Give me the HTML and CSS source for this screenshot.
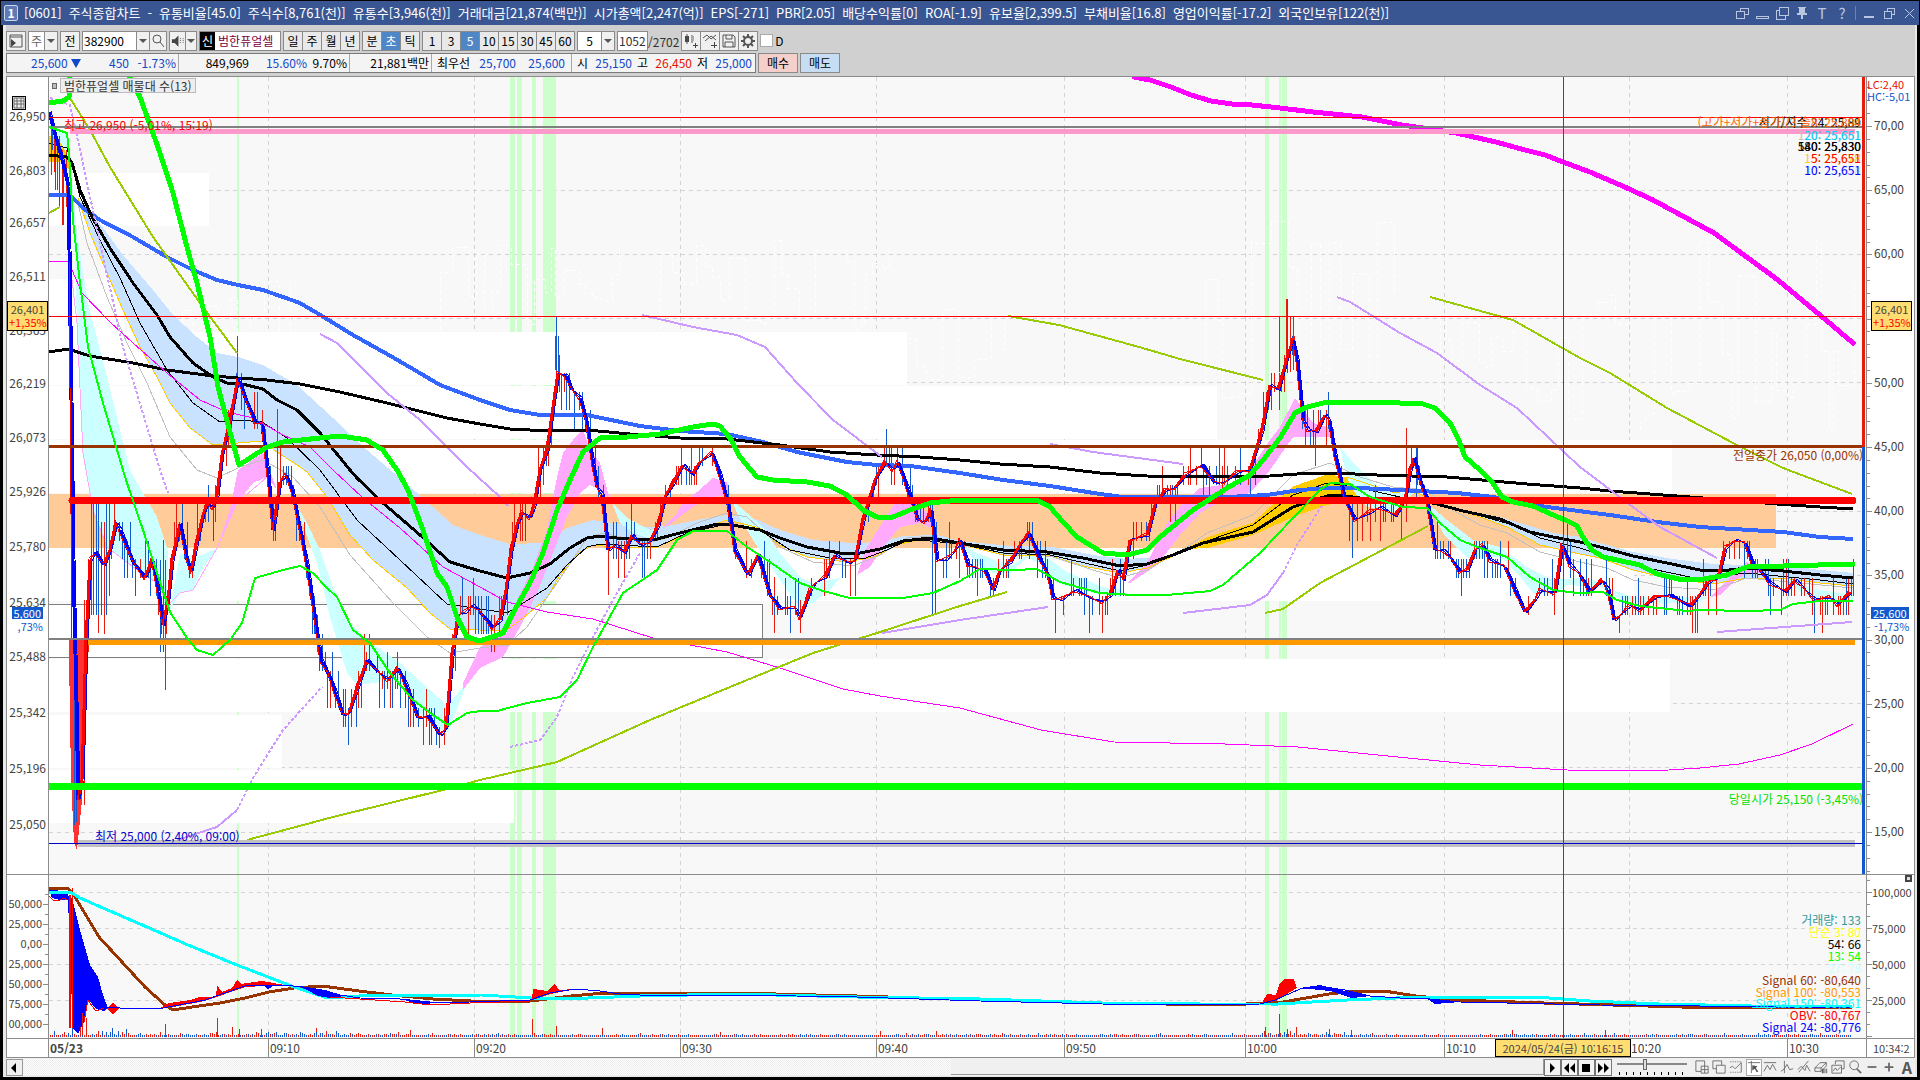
FILE: index.html
```
<!DOCTYPE html>
<html lang="ko">
<head>
<meta charset="utf-8">
<title>[0601] 주식종합차트</title>
<link rel="stylesheet" href="styles.css">
</head>
<body>
<header class="titlebar">
  <span class="win-no">1</span>
  <h1 class="title"><span>[0601]</span><span>주식종합차트</span><span>-</span><span>유통비율[45.0]</span><span>주식수[8,761(천)]</span><span>유통수[3,946(천)]</span><span>거래대금[21,874(백만)]</span><span>시가총액[2,247(억)]</span><span>EPS[-271]</span><span>PBR[2.05]</span><span>배당수익률[0]</span><span>ROA[-1.9]</span><span>유보율[2,399.5]</span><span>부채비율[16.8]</span><span>영업이익률[-17.2]</span><span>외국인보유[122(천)]</span></h1>
  <nav class="win-tools">
    <button aria-label="분리"><svg viewBox="0 0 14 14"><path d="M5 5V2h8v6h-4M1 5h8v7H1z"/></svg></button>
    <button aria-label="접기"><svg viewBox="0 0 14 14"><path d="M1 12V10h12v2z"/></svg></button>
    <button aria-label="복사"><svg viewBox="0 0 14 14"><path d="M4 1h9v8H4zM4 4H1v9h9V9"/></svg></button>
    <button aria-label="고정"><svg viewBox="0 0 14 14"><path class="f" d="M3 1h8v1h-1v5h2v2H8v4H6V9H2V7h2V2H3z"/></svg></button>
    <button>T</button>
    <button>?</button>
    <i class="bar"></i>
    <button aria-label="최소화"><svg viewBox="0 0 14 14"><path class="f" d="M2 10h10v2H2z"/></svg></button>
    <button aria-label="이전 크기"><svg viewBox="0 0 14 14"><path d="M5 5V2h7v6H9M2 5h7v7H2z"/></svg></button>
    <button aria-label="닫기"><svg viewBox="0 0 14 14"><path d="M3 3l9 9M12 3l-9 9"/></svg></button>
  </nav>
</header>
<main class="window">
  <div class="toolbar">
    <button class="btn w20" aria-label="메뉴"><svg viewBox="0 0 16 16"><path d="M2 2h12v12H2zM2 4h12"/><path class="k" d="M3 6l5 4-5 4z"/></svg></button>
    <span class="combo"><button class="box w16 dim">주</button><button class="drop" aria-label="열기"></button></span>
    <button class="btn w20">전</button>
    <span class="combo"><input class="box w56" value="382900" aria-label="종목코드"><button class="drop" aria-label="열기"></button><button class="btn w18" aria-label="검색"><svg viewBox="0 0 16 16"><circle cx="7" cy="6" r="4"/><path d="M10 9l4 5"/></svg></button></span>
    <span class="combo"><button class="btn w16" aria-label="소리"><svg viewBox="0 0 16 16"><path class="k" d="M2 6h3l4-4v12l-4-4H2z"/><path d="M11 5v6M14 5v6" stroke-dasharray="1 1"/></svg></button><button class="drop slim" aria-label="열기"></button></span>
    <span class="name"><b>신</b>범한퓨얼셀</span>
    <span class="group"><button>일</button><button>주</button><button>월</button><button>년</button></span>
    <span class="group"><button>분</button><button class="on">초</button><button>틱</button></span>
    <span class="group"><button>1</button><button>3</button><button class="on">5</button><button>10</button><button>15</button><button>30</button><button>45</button><button>60</button></span>
    <span class="combo"><input class="box w24 mid" value="5" aria-label="간격"><button class="drop" aria-label="열기"></button></span>
    <span class="count"><input class="box w28" value="1052" aria-label="봉 개수">/2702</span>
    <span class="group tools">
      <button aria-label="봉 추가"><svg viewBox="0 0 16 16"><path class="k" d="M2 3h4v6H2zM10 12h5v1h-5zM12 10h1v5h-1z"/><path d="M4 1v10M9 2v8"/><path class="g" d="M8 3h3v5H8z"/></svg></button>
      <button aria-label="지표 추가"><svg viewBox="0 0 16 16"><path d="M1 5l4-3 4 4 5-4M3 8l6-5 5 4"/><path class="k" d="M9 12h6v1H9zM12 9h1v6h-1z"/></svg></button>
      <button aria-label="저장"><svg viewBox="0 0 16 16"><path d="M2 2h10l2 2v10H2zM5 2v4h6V2M4 14V9h8v5"/></svg></button>
      <button aria-label="설정"><svg viewBox="0 0 16 16"><circle cx="8" cy="8" r="4" stroke-width="2"/><path stroke-width="2" stroke-linecap="butt" d="M8 1v3M8 12v3M1 8h3M12 8h3M3 3l2 2M11 11l2 2M13 3l-2 2M3 13l2-2"/></svg></button>
    </span>
    <label class="dcheck"><input type="checkbox">D</label>
  </div>
  <div class="quotes">
    <div class="quote-box">
      <span class="q blue c1">25,600 <i class="down"></i></span><span class="q blue c2">450</span><span class="q blue c3 sep">-1.73%</span>
      <span class="q c4">849,969</span><span class="q blue c5">15.60%</span><span class="q c6 sep">9.70%</span>
      <span class="q c7 sep">21,881백만</span><span class="q c8">최우선</span><span class="q blue c9">25,700</span><span class="q blue c9 sep2">25,600</span>
      <span class="q c10">시</span><span class="q blue c11">25,150</span><span class="q c10">고</span><span class="q red c11">26,450</span><span class="q c10">저</span><span class="q blue c11">25,000</span>
    </div>
    <button class="trade buy">매수</button>
    <button class="trade sell">매도</button>
  </div>
  <section class="chart">
    <div class="axis left" id="axisLeft"><button class="grid-btn" aria-label="표"><svg viewBox="0 0 12 12"><path d="M1 1h10v10H1zM1 4h10M1 7h10M4 1v10M8 1v10"/></svg></button></div>
    <div class="plot" id="plot">
      <svg id="canvas" viewBox="49 77 1817 961" preserveAspectRatio="none"></svg>
      <div class="legend-tag"><i></i><span>범한퓨얼셀 매물대 수(13)</span></div>
    </div>
    <div class="axis right" id="axisRight"><button class="panel-x" aria-label="닫기"></button></div>
    <div class="time-pad"></div>
    <div class="times" id="times"></div>
    <div class="time-end">10:34:2</div>
  </section>
  <footer class="bottom">
    <button class="scroll-btn" aria-label="왼쪽"><svg viewBox="0 0 12 12"><path d="M8 1L3 6l5 5z"/></svg></button>
    <div class="track"><div class="thumb"></div></div>
    <div class="play">
      <button aria-label="재생"><svg viewBox="0 0 12 12"><path d="M4 1l5 5-5 5z"/></svg></button>
      <button aria-label="뒤로"><svg viewBox="0 0 12 12"><path d="M6 1L1 6l5 5zM12 1L7 6l5 5z"/></svg></button>
      <button aria-label="정지"><svg viewBox="0 0 12 12"><path d="M2 2h8v8H2z"/></svg></button>
      <button aria-label="앞으로"><svg viewBox="0 0 12 12"><path d="M1 1l5 5-5 5zM7 1l5 5-5 5z"/></svg></button>
    </div>
    <input class="speed" type="range" min="0" max="10" value="4" aria-label="속도">
    <div class="draw">
      <button aria-label="창 추가"><svg viewBox="0 0 16 16"><path d="M1 1h10v12H1z"/><path class="w" d="M7 7h8v8H7zM11 7v8M7 11h8"/></svg></button>
      <button aria-label="창 겹침"><svg viewBox="0 0 16 16"><path d="M1 1h10v9H1z"/><path class="w" d="M5 6h10v9H5z"/></svg></button>
      <button aria-label="영역"><svg viewBox="0 0 16 16"><path d="M1 2h14M1 14h14" stroke-dasharray="1 1"/><path d="M1 9l3-2 3 3 7-7M14 3v11"/></svg></button>
      <button class="active" aria-label="십자선"><svg viewBox="0 0 16 16"><path d="M1 3h14M5 1v14"/><path class="k" d="M6 6l6 1-2 2 3 4-2 1-2-4-3 2z"/></svg></button>
      <button aria-label="추세"><svg viewBox="0 0 16 16"><path d="M1 3h14M1 13l4-7 3 5 3-6 4 7"/></svg></button>
      <button aria-label="수직선"><svg viewBox="0 0 16 16"><path d="M5 1v14M1 13l4-3 3-5 3 6 4-1"/></svg></button>
      <button aria-label="사선"><svg viewBox="0 0 16 16"><path d="M2 14L13 1M1 11l4-4 4 5 2-6 4 7"/></svg></button>
      <button aria-label="모두 지우기"><svg viewBox="0 0 16 16"><path d="M1 9l6-6h7l-6 6zM1 9v4h7V9M8 13l6-6V3"/><path class="k" d="M9 10h2v5H9zM12 10h1v5h-1zM14 10h1v5h-1z"/></svg></button>
      <button aria-label="차트 저장"><svg viewBox="0 0 16 16"><path d="M5 5V1h10v9h-3"/><path class="w" d="M1 6h11v9H1zM2 13l3-4 2 3 4-4"/></svg></button>
      <button aria-label="확대"><svg viewBox="0 0 16 16"><circle cx="7" cy="6" r="5"/><path d="M10 10l5 5" stroke-width="2"/></svg></button>
      <button aria-label="축소"><svg viewBox="0 0 16 16"><path d="M3 8h10" stroke-width="2"/></svg></button>
      <button aria-label="늘리기"><svg viewBox="0 0 16 16"><path d="M3 8h10M8 3v10" stroke-width="2"/></svg></button>
      <button class="bold">A</button>
    </div>
  </footer>
</main>
<script src="chart.js"></script>
</body>
</html>
```
FILE: styles.css
```
* { box-sizing: border-box; }
body {
  margin: 0;
  height: 100vh;
  padding: 1px 1px 3px;
  display: flex;
  flex-direction: column;
  overflow: hidden;
  background: #000;
  color: #000;
  font: 12px/12px "Noto Sans CJK KR", sans-serif;
}
button, input { font: inherit; color: inherit; margin: 0; padding: 0; border-radius: 0; }
svg { display: block; }

.titlebar {
  flex: none;
  height: 24px;
  display: flex;
  align-items: center;
  gap: 6px;
  padding: 0 3px;
  background: #3a5692;
  color: #fff;
}
.win-no {
  width: 14px;
  height: 16px;
  border: 1px solid #cdd6ea;
  border-radius: 2px;
  background: #5f7bb5;
  text-align: center;
  font-weight: bold;
  line-height: 14px;
}
.title { margin: 0; font-size: 13px; line-height: 16px; font-weight: normal; display: flex; gap: 7px; white-space: nowrap; }
.win-tools { margin-left: auto; display: flex; align-items: center; gap: 6px; }
.win-tools button { width: 14px; height: 16px; border: 0; background: none; color: #b9c6e2; font-size: 15px; line-height: 14px; }
.win-tools svg { width: 14px; height: 14px; shape-rendering: crispEdges; }
.win-tools path { fill: none; stroke: #b9c6e2; }
.win-tools .f { fill: #b9c6e2; stroke: none; }
.win-tools .bar { width: 1px; height: 14px; background: #6d83b3; }

.window {
  flex: 1;
  min-height: 0;
  display: flex;
  flex-direction: column;
  margin: 0 2px 0 2px;
  border: solid #e8e8e8;
  border-width: 0 2px 1px 3px;
  background: #d0d0d0;
}
.toolbar { flex: none; display: flex; align-items: center; gap: 2px; height: 26px; padding-top: 5px; }
.toolbar button, .box, .name { height: 20px; }
.btn, .drop, .group button {
  border: 1px solid #8a8a8a;
  background: #f0f0f0;
  display: inline-flex;
  align-items: center;
  justify-content: center;
}
.btn svg, .group svg { width: 16px; height: 16px; }
.toolbar path, .toolbar circle { fill: none; stroke: #555; }
.toolbar .k { fill: #444; stroke: none; }
.toolbar .g { fill: #aaa; stroke: none; }
.combo, .group { display: flex; }
.combo > * + * { margin-left: -1px; }
.group button { width: 20px; margin-right: -1px; background: #e9e9e9; }
.group { margin-right: 1px; }
.group .on { background: #4f87c6; color: #fff; }
.box { border: 1px solid #8a8a8a; background: #fff; padding: 0 1px; }
.mid { text-align: center; }
.dim { color: #666; }
.w16 { width: 17px; } .w18 { width: 18px; } .w20 { width: 20px; } .w24 { width: 25px; } .w28 { width: 31px; } .w56 { width: 55px; }
.drop { width: 14px; }
.slim { width: 12px; }
.drop::after { content: ""; border: 4px solid transparent; border-top-color: #555; border-bottom: 0; }
.name { display: flex; align-items: center; width: 82px; border: 1px solid #8a8a8a; background: #fff; color: #7d0040; white-space: nowrap; overflow: hidden; gap: 3px; }
.name b { background: #000; color: #fff; font-weight: normal; padding: 3px 2px; }
.count { color: #333; white-space: nowrap; }
.tools button { background: #f0f0f0; }
.dcheck { display: flex; align-items: center; gap: 2px; }
.dcheck input { appearance: none; width: 13px; height: 13px; border: 1px solid #aaa; background: #fff; }

.quotes { flex: none; display: flex; gap: 2px; height: 25px; padding: 2px 0 3px; }
.quote-box { display: flex; align-items: center; width: 750px; border: 1px solid #7a7a7a; background: #f4f4f4; }
.q { flex: none; text-align: right; white-space: nowrap; line-height: 18px; }
.sep { border-right: 1px solid #a8a8a8; padding-right: 2px; }
.sep2 { border-right: 1px solid #a8a8a8; padding-right: 6px; }
.blue { color: #1048c8; }
.red { color: #e81400; }
.down { display: inline-block; border: 5px solid transparent; border-top: 9px solid #1048c8; border-bottom: 0; }
.c1 { width: 74px; } .c2 { width: 48px; } .c3 { width: 50px; } .c4 { width: 70px; } .c5 { width: 58px; } .c6 { width: 43px; }
.c7 { width: 82px; } .c8 { width: 38px; } .c9 { width: 46px; } .sep2 { width: 56px; } .c10 { width: 16px; } .c11 { width: 44px; }
.trade { width: 40px; border: 1px solid #8a8a8a; }
.buy { background: #f5cfca; }
.sell { background: #c7ddf4; }

.chart {
  flex: 1;
  min-height: 0;
  display: grid;
  grid-template-columns: 42px 1fr 48px;
  grid-template-rows: 1fr 19px;
  border: 1px solid #8c8c8c;
  background: #fff;
  color: #444;
}
.axis { position: relative; overflow: hidden; }
.axis.left { border-right: 1px solid #8c8c8c; }
.axis.right { border-left: 1px solid #8c8c8c; }
.axis span { position: absolute; white-space: nowrap; transform: translateY(-50%); }
.axis.left span { right: 2px; }
.axis.right span { left: 7px; }
.axis.left .low { right: 6px; font-size: 11px; }
.axis.right .low { font-size: 11px; left: 5px; }
.axis i { position: absolute; height: 1px; width: 3px; background: #8c8c8c; }
.axis.right i { left: 0; }
.axis.left i { right: 0; }
.axis i.big { width: 5px; }
.axis i.rule { width: 100%; }
.axis .badge { border: 1px solid #000; background: #ffdd70; width: 41px; padding: 1px; font-size: 11px; line-height: 13px; text-align: center; }
.axis .badge em { display: block; font-style: normal; color: #f00; }
.axis.left .badge { right: 0; }
.axis.right .badge { left: 4px; }
.axis .now { background: #1159cc; color: #fff; padding: 0 2px; font-size: 11px; }
.axis .chg { color: #1159cc; font-size: 11px; }
.axis.left .now, .axis.left .chg { right: 5px; }
.axis.right .now { left: 4px; }
.axis .lc { color: #e81400; font-size: 11px; }
.axis .hc { color: #1159cc; font-size: 11px; }
.axis.right .lc, .axis.right .hc { left: 0; }
.grid-btn { position: absolute; left: 5px; top: 19px; width: 14px; height: 14px; border: 1px solid #000; background: #eee; }
.grid-btn path { fill: none; stroke: #666; }
.panel-x { position: absolute; right: 2px; top: 83%; width: 7px; height: 7px; border: 2px solid #444; background: #ddd; }
.plot { position: relative; overflow: hidden; background: #f8f8f8; }
.plot svg { position: absolute; width: 100%; height: 100%; shape-rendering: crispEdges; }
.plot > span { position: absolute; white-space: nowrap; transform: translateY(-50%); }
.legend-tag { position: absolute; top: 1px; left: 3px; display: flex; align-items: center; gap: 3px; color: #333; }
.legend-tag i { width: 5px; height: 6px; border: 1px solid #666; background: #bbb; }
.legend-tag span { border: 1px solid #bbb; background: #eee; padding: 0 3px; line-height: 13px; }
.time-pad { border-right: 1px solid #8c8c8c; border-top: 1px solid #8c8c8c; }
.times { position: relative; border-top: 1px solid #8c8c8c; }
.times span { position: absolute; top: 0; height: 100%; padding: 3px 1px; border-left: 1px solid #8c8c8c; }
.times .first { border: 0; font-weight: bold; }
.times .cursor { border: 1px solid #000; background: #ffdd70; width: 136px; padding: 2px 1px; font-size: 11px; text-align: center; transform: translateX(-50%); white-space: nowrap; }
.time-end { border-left: 1px solid #8c8c8c; border-top: 1px solid #8c8c8c; padding: 3px 0 0 6px; font-size: 11px; white-space: nowrap; }

.bottom { flex: none; display: flex; align-items: center; height: 18px; background: #f0f0f0; }
.scroll-btn { width: 17px; height: 17px; border: 1px solid #999; background: #f0f0f0; padding: 2px 1px; }
.scroll-btn svg { width: 12px; height: 12px; }
.track { flex: 1; height: 16px; display: flex; justify-content: flex-end; background: repeating-conic-gradient(#fff 0 25%, #ececec 0 50%) 0 0 / 2px 2px; }
.thumb { width: 39%; border: solid #999; border-width: 0 1px 1px 0; background: #f0f0f0; }
.play { display: flex; }
.play button { width: 17px; height: 17px; border: 1px solid #777; background: #f4f4f4; padding: 2px 1px; }
.play svg { width: 12px; height: 12px; }
.speed {
  appearance: none;
  width: 70px;
  height: 16px;
  margin: 0 8px 0 5px;
  background:
    linear-gradient(#888, #888) 0 4px / 100% 2px no-repeat,
    repeating-linear-gradient(90deg, #000 0 1px, transparent 1px 7px) 2px 13px / 100% 3px no-repeat;
}
.speed::-webkit-slider-thumb { appearance: none; width: 4px; height: 11px; margin-bottom: 5px; border: 1px solid #666; background: #ddd; }
.draw { display: flex; gap: 1px; }
.draw button { width: 16px; height: 17px; border: 0; background: none; color: #555; }
.draw .active { background: #fff; border: 1px solid #aaa; }
.draw svg { width: 14px; height: 14px; }
.draw path, .draw circle { fill: none; stroke: #666; }
.draw .w { fill: #f0f0f0; }
.draw .k { fill: #555; stroke: none; }
.draw .bold { font-weight: bold; font-size: 16px; }
```
FILE: chart.js
```
// Price chart: series are [x, y] pairs in the chart's own coordinate space.
const X0 = 49, W = 1817, Y0 = 77, H = 961;
const out = [];
const line = (pts, color, w, extra = '') =>
  out.push(`<polyline points="${pts}" fill="none" stroke="${color}" stroke-width="${w}" stroke-linejoin="round" ${extra}/>`);
const area = (pts, color) => out.push(`<polygon points="${pts}" fill="${color}"/>`);
const rect = (x, y, w, h, color) => out.push(`<rect x="${x}" y="${y}" width="${w}" height="${h}" fill="${color}"/>`);
const parse = s => s.trim().split(/\s+/).map(p => p.split(',').map(Number));
const at = (pts, x) => {
  for (let i = 1; i < pts.length; i++) if (x <= pts[i][0]) {
    const [a, b] = pts[i - 1], [c, d] = pts[i];
    return b + (d - b) * (x - a) / (c - a || 1);
  }
  return pts[pts.length - 1][1];
};
let seed = 7;
const rnd = () => (seed = (seed * 16807) % 2147483647) / 2147483647;

// grid
const gridX = [268, 474, 680, 876, 1064, 1245, 1444, 1629, 1787];
gridX.forEach(x => line(`${x + .5},77 ${x + .5},1038`, '#d3d3d3', 1, 'stroke-dasharray="4 4"'));
[126, 190, 254, 318, 382, 446, 511, 575, 639, 703, 767, 832, 892, 928, 964, 1000]
  .forEach(y => line(`49,${y + .5} 1863,${y + .5}`, '#d3d3d3', 1, 'stroke-dasharray="4 4"'));
// signal bands
[[237, 2], [510, 5], [517, 5], [532, 4], [543, 13], [1265, 4], [1279, 2], [1282, 5]]
  .forEach(([x, w]) => rect(x, 77, w, 961, '#ccffcc'));

// volume profile
[[173, 209], [279, 124], [332, 907], [386, 1217], [440, 1672], [548, 1634], [604, 763], [659, 1670], [715, 282], [770, 514]]
  .forEach(([y, x]) => rect(49, y, x - 49, 53, '#fff'));
rect(49, 494, 1727, 54, '#ffcb98');
line('49,604.5 762.5,604.5 762.5,657.5 49,657.5', '#808080', 1);

// faint white dashed history line above the price
function ghost(a, b, base, amp) {
  let d = '', y = base;
  for (let x = a; x < b; x += 4 + Math.floor(rnd() * 14)) { d += `${x},${y} `; y = base - rnd() * amp; d += `${x},${y} `; }
  line(d, '#fff', 1, 'stroke-dasharray="4 3"');
}
ghost(160, 300, 420, 150); ghost(440, 620, 330, 90); ghost(660, 890, 330, 90); ghost(900, 1010, 380, 110);
ghost(1180, 1400, 420, 200); ghost(1440, 1640, 430, 140); ghost(1640, 1855, 430, 190);

// filled spreads
const BLUE_UP = '92,213 123,255 153,290 173,315 197,337 217,353 238,357 263,365 297,385 333,418 367,450 408,485 433,507 453,525 480,535 510,544 543,543 567,528 593,520 613,523 647,527 667,526 697,520 727,515 753,518 780,530 813,540 853,543 880,542 903,536 937,535 960,541 1010,546 1053,547 1093,555 1127,559 1160,557 1180,552';
const YEL = '78,198 90,233 107,273 123,310 140,347 157,377 170,403 190,428 213,445 238,443 262,441 277,452 297,465 307,472 327,497 350,535 373,560 407,588 430,613 450,629 480,630 507,630 523,618 547,598 560,575 580,552 593,545 613,547 657,547 680,537 707,527 727,520 760,528 780,545 807,557 847,562 873,557 900,544 927,538 960,544 1003,555 1047,555 1083,566 1120,573 1147,568 1173,556 1187,548';
const YEL2 = '1187,548 1207,538 1253,523 1293,487 1327,475 1350,478 1377,487 1420,494 1447,507 1480,517 1507,527 1540,545 1580,554 1600,558 1633,570 1667,578 1713,584 1747,578 1783,578 1820,583 1853,586';
const rev = s => s.split(' ').reverse().join(' ');
area(BLUE_UP + ' ' + rev(YEL), '#c8e2ff');
area('1447,507 1500,517 1553,533 1580,537 1600,543 1633,552 1673,559 1713,564 1747,565 1783,565 1820,570 1853,573 1853,586 1820,583 1783,578 1747,578 1713,584 1667,578 1633,570 1600,558 1580,554 1540,545 1507,527 1480,517', '#c8e2ff');
area('1187,549 1207,538 1253,523 1293,487 1327,475 1350,478 1377,487 1400,491 1400,503 1377,500 1353,500 1327,505 1300,514 1253,535 1207,548', '#ffcc00');
rect(49, 136, 11, 26, '#ffcc00');
area('60,138 72,160 69,170 60,160', '#ffcc00');
const CY = '#ccffff', PK = '#ffaaff';
area('50,125 66,132 72,165 62,145', CY);
area('72,180 77,233 88,303 107,377 130,470 143,493 157,517 168,550 167,610 157,583 133,567 107,547 93,510 85,467 83,453 77,323', CY);
area('170,610 180,553 197,557 217,548 200,573 193,590 180,593 172,607', CY);
area('217,548 230,510 238,470 263,453 277,490 267,477 253,483 237,503', PK);
area('290,493 307,523 320,550 333,587 350,623 370,642 400,663 430,690 447,705 467,683 448,732 433,727 417,710 400,680 357,685 347,673 330,617 317,563 300,517', CY);
area('463,683 480,647 507,633 517,600 533,567 547,530 557,477 563,453 577,435 583,430 590,450 600,463 610,500 600,490 590,485 580,493 567,517 553,553 537,593 520,627 503,657 480,668 463,690', PK);
area('612,503 627,518 650,530 660,530 653,540 633,533 620,523', CY);
area('660,530 677,513 683,502 697,492 713,478 727,482 730,495 713,497 693,507 673,522', PK);
area('732,500 747,513 763,527 780,553 800,577 813,583 840,578 830,590 813,603 800,608 787,590 773,570 753,540 737,513', CY);
area('857,575 867,547 880,527 897,500 913,500 927,513 937,530 920,523 900,527 883,547 870,567', PK);
area('960,543 977,553 1003,563 1013,565 1027,555 1047,557 1067,572 1103,587 1123,590 1120,597 1093,593 1057,583 1040,563 1027,558 1010,573 993,573 977,563', CY);
area('1127,583 1147,563 1167,523 1183,503 1200,488 1237,483 1250,470 1270,440 1280,427 1295,398 1313,423 1330,428 1330,437 1293,437 1270,470 1250,493 1223,500 1200,513 1180,535 1157,565 1130,583', PK);
area('1340,447 1357,467 1373,483 1393,493 1413,493 1397,513 1367,507 1350,487 1343,460', CY);
area('1427,503 1447,520 1473,540 1500,547 1527,567 1553,580 1580,578 1603,582 1613,590 1633,597 1707,597 1700,602 1667,603 1627,603 1600,587 1567,585 1557,593 1533,593 1517,573 1500,557 1467,558 1443,533', CY);
area('1710,597 1730,577 1747,562 1763,573 1747,573 1733,582 1720,595', PK);
area('1787,582 1820,590 1853,595 1853,602 1807,597', CY);

// thin averages
line('70,262 77,323 83,453 93,510 107,547 133,567 157,583 168,605 180,593 193,590 217,548 237,503 267,477', PK, 1);
line(YEL, '#ffcc00', 1);
line(YEL2, '#ffcc00', 1);
line('78,203 87,243 107,297 127,343 147,383 170,437 197,470 217,478 240,467 263,460 293,477 320,507 350,555 393,603 427,637 450,653 480,648 507,645 527,627 557,583 587,538 603,533 647,543 667,538 697,523 727,513 747,517 780,547 813,562 853,566 880,555 907,538 933,536 960,545 1053,557 1093,570 1120,578 1147,570 1187,547 1207,533 1253,515 1293,475 1330,463 1360,477 1393,487 1427,490 1447,507 1480,525 1507,533 1540,552 1580,562 1607,568 1633,580 1667,587 1713,590 1747,578 1853,588', '#c0c0c0', 1);
line('49,143 67,148 72,165 80,197 100,240 120,278 140,323 167,370 193,403 220,422 240,420 262,422 287,438 320,470 357,520 400,560 447,604 480,609 507,613 520,605 547,588 567,565 587,547 600,544 657,547 687,533 727,524 760,530 790,550 830,558 863,559 887,550 910,539 960,544 1003,553 1050,555 1120,571 1147,565 1187,548 1253,525 1293,495 1327,483 1360,488 1400,497 1460,510 1513,525 1540,538 1580,548 1633,565 1690,577 1713,577 1747,573 1820,580 1853,584', '#000', 1);

// candles
const P = parse('49,112 55,135 62,160 68,185 69,250 71,400 73,560 76,700 78,800 82,780 86,640 90,560 95,552 104,565 110,550 116,522 120,530 133,562 145,578 152,560 157,585 163,625 168,600 172,560 180,524 187,560 191,572 196,545 203,515 207,503 213,508 217,495 222,455 230,420 238,378 246,400 255,422 262,425 268,475 273,530 280,482 286,475 292,490 298,520 307,565 315,620 321,660 329,675 335,692 343,715 349,713 358,685 367,660 378,672 388,680 398,668 406,685 418,718 428,716 440,735 446,728 452,655 458,615 465,612 472,605 480,612 493,628 500,620 506,590 511,550 517,525 522,512 530,518 534,505 540,470 547,450 554,400 558,373 566,376 572,390 580,398 586,420 593,465 597,487 602,495 608,550 615,545 624,553 632,535 640,545 650,542 658,525 665,497 673,483 683,465 692,475 700,462 712,453 720,475 728,505 735,550 748,575 758,555 770,595 780,608 795,608 800,618 810,590 815,583 825,577 835,555 848,563 855,560 863,520 875,480 885,462 893,470 898,462 908,490 918,520 925,522 931,510 937,560 945,560 955,550 960,540 968,565 975,568 985,570 993,590 1000,570 1010,562 1020,545 1029,533 1038,555 1048,575 1053,598 1060,600 1075,590 1090,598 1103,602 1110,595 1118,570 1123,580 1130,540 1147,535 1155,505 1165,490 1175,488 1185,475 1202,465 1215,483 1225,482 1237,472 1250,470 1262,430 1270,385 1278,390 1288,355 1293,340 1297,360 1303,420 1308,430 1316,432 1325,415 1329,420 1335,455 1345,500 1355,520 1370,512 1380,507 1395,516 1405,500 1410,470 1414,458 1420,480 1427,500 1435,550 1443,550 1452,560 1460,572 1467,570 1475,550 1483,545 1490,560 1505,567 1515,590 1525,612 1535,600 1540,590 1555,593 1562,545 1570,565 1580,575 1590,592 1602,580 1608,590 1614,620 1620,615 1630,605 1640,610 1655,597 1670,595 1690,606 1700,595 1708,582 1718,578 1725,548 1735,540 1745,543 1753,565 1760,570 1770,583 1785,592 1795,580 1805,590 1815,600 1830,597 1838,605 1850,592');
const RED = '#e81c0c', BLU = '#1159cc', STEP = 18.6;
let reds = '', blues = '';
for (let x = 88; x < 1854; x += 2.6) {
  if (rnd() < .15) continue;
  const y = at(P, x), slope = at(P, x + 3) - at(P, x - 3);
  const k = Math.floor((y - 447.5) / STEP);
  let hi = 447.5 + k * STEP, lo = hi + STEP;
  const r = rnd(), wild = x < 620 ? .38 : .16;
  if (r < wild) hi -= STEP; else if (r < wild * 2) lo += STEP;
  if (x < 110) { hi -= STEP * 2; lo += STEP * 2; }
  if (x > 620 && r > .8) continue;
  const d = `M${Math.round(x) + .5} ${Math.round(hi)}V${Math.round(Math.min(lo, x < 500 ? 748 : 633))}`;
  if ((slope < 0) !== (rnd() < .22)) reds += d; else blues += d;
}
// session extremes and the opening plunge
reds += 'M51.5 120V175M54.5 130V172M57.5 140V190M62.5 150V225M63.5 160V225M66.5 150V207M237.5 336V380M1286.5 299V360M1406.5 428V520M1293.5 317V370M1290.5 317V372M1279.5 317V372M165.5 560V690M98.5 560V633M84.5 600V805M555.5 336V370M608.5 560V595M774.5 577V633M800.5 600V633M277.5 409V510';
blues += 'M52.5 120V150M55.5 130V190M59.5 136V207M556.5 317V373M558.5 336V373M1287.5 299V340M932.5 502V614M935.5 540V614M1352.5 502V558M160.5 560V652M163.5 540V652M1416.5 447V500';
out.push(`<path d="${reds}" stroke="${RED}" fill="none"/><path d="${blues}" stroke="${BLU}" fill="none"/>`);
area('69,640 84,640 84,720 82,800 79,830 77,850 74,842 72,800 70,730', '#ff3333');
line('74.5,653 74.5,825', BLU, 1); line('76.5,710 76.5,822', BLU, 1);

// long averages
line('49,195 68,195 75,200 83,208 100,220 133,237 167,257 193,270 217,280 238,285 263,290 300,303 322,316 353,335 387,354 413,369 440,385 480,400 510,410 540,415 587,415 640,426 680,431 727,434 763,442 797,452 847,462 877,465 910,466 960,473 1003,480 1050,486 1100,494 1123,497 1227,497 1267,495 1300,490 1330,488 1360,488 1420,491 1457,493 1493,497 1547,507 1610,515 1657,522 1700,527 1750,530 1783,532 1820,537 1853,539', '#3366ff', 4);
line('49,352 68,349 90,356 133,363 167,370 213,376 238,378 267,380 300,384 340,392 387,403 447,418 480,424 510,429 550,431 587,430 630,434 680,438 727,439 780,445 830,452 877,455 920,457 960,460 1000,464 1050,467 1100,473 1147,476 1227,477 1270,476 1310,473 1333,473 1377,475 1447,477 1493,481 1527,484 1580,488 1610,491 1690,497 1777,504 1820,507 1853,509', '#000', 3);
line('49,155 67,157 72,163 80,190 92,217 110,248 133,283 157,315 170,337 193,363 213,377 227,383 238,383 263,389 277,400 297,410 320,433 350,470 357,478 383,503 420,535 450,562 480,571 507,578 530,573 550,564 570,548 587,538 600,536 617,538 653,540 680,533 713,525 727,524 760,530 780,538 807,547 840,553 860,553 880,549 903,541 930,538 960,543 1003,550 1047,552 1083,558 1120,566 1147,564 1173,555 1203,543 1253,532 1293,507 1330,495 1353,497 1387,502 1433,503 1463,511 1500,519 1530,532 1553,537 1580,542 1600,547 1633,556 1667,563 1700,570 1720,571 1747,568 1783,571 1820,575 1853,578', '#000', 3);
line('49,261 69,262 72,270 82,293 110,322 133,343 167,373 200,400 227,412 253,418 283,435 310,447 333,470 363,498 400,528 443,567 480,587 507,602 547,612 593,619 653,638 727,652 780,668 843,689 880,696 960,708 1041,730 1114,742 1225,744 1298,747 1408,758 1480,765 1567,770 1653,771 1700,768 1739,764 1780,755 1812,744 1853,724', '#ff00ff', 1);
line('1134,77 1150,80 1171,87 1191,95 1211,101 1232,104 1252,105 1280,108 1313,112 1362,117 1402,125 1456,133 1496,142 1525,150 1545,155 1563,162 1590,172 1627,188 1653,200 1714,233 1778,280 1820,315 1853,343', '#ff00ff', 5, 'stroke-linecap="round"');

// fast line, coloured by direction, with its one-bar-late signal
for (let i = 1; i < P.length; i++) {
  const [a, b] = P[i - 1], [c, d] = P[i];
  line(`${a},${b} ${c},${d}`, d < b ? '#ff0000' : '#0000ff', Math.abs(d - b) > 10 ? 3 : 1);
}
line(P.map(([x, y], i) => `${x + 2},${y + (i % 2 ? 1 : -1)}`).join(' '), '#0000e0', 1);
line(P.filter(p => p[0] > 88).map(([x, y], i) => `${x - 1},${y + (i % 2 ? 2 : -2)}`).join(' '), '#ff0000', 1);
line('69,260 72,640', '#ff0000', 1);

// envelopes
const OL = '#99cc00', PU = '#cc99ff';
['49,213 60,207', '70,98 90,130 110,167 153,237 200,303 237,353', '247,840 333,817 443,790 480,780 557,762 650,720 730,687 813,653 877,633 960,606 1007,592', '1008,316 1059,325 1139,347 1180,359 1263,380', '1265,613 1283,609 1320,583 1373,555 1428,526', '1430,297 1513,320 1580,358 1610,373 1667,408 1733,443 1783,468 1852,494']
  .forEach(s => line(s, OL, 2));
['320,334 337,343 387,393 420,420 467,467 500,497 508,506', '642,315 693,327 737,335 765,347 797,383 833,420 882,457', '882,633 960,620 1048,607', '1050,444 1093,452 1183,464', '1183,613 1250,605 1267,595 1283,573', '1337,297 1350,302 1400,333 1437,353 1480,385 1517,408 1580,467 1633,507 1660,527 1717,558', '1717,632 1852,622', '177,840 217,827 237,810']
  .forEach(s => line(s, PU, 2));
['50,98 70,105 80,150 100,243 123,347 160,470 168,493', '237,810 253,778 283,730 322,687', '510,747 540,740 557,717 573,677 593,637 613,600 640,553', '1283,573 1297,545 1323,504']
  .forEach(s => line(s, PU, 2, 'stroke-dasharray="3 2"'));

// horizontal levels
rect(49, 126, 1813, 2, '#808080');
rect(70, 129, 1785, 5, '#ff99cc');
rect(49, 117, 1813, 1, '#ff0000');
rect(78, 840, 1777, 7, '#c0c0c0');
rect(49, 843, 1813, 1, '#0000c8');
rect(49, 638, 1813, 2, '#808080');
rect(88, 640, 1767, 5, '#ff9900');
rect(49, 783, 1813, 7, '#00ff00');
line('72,500.5 1853,500.5', '#ff0000', 7, 'stroke-linecap="round"');
rect(49, 445, 1813, 3, '#993300');

// green averages
const G = '#00ff00';
line('49,127 67,133 69,153 73,220 80,283 88,347 103,403 123,470 127,483 143,530 157,573 170,612 187,638 197,650 213,655 230,640 242,623 255,578 283,570 300,566 313,573 327,588 337,597 353,630 370,643 390,673 413,700 433,715 448,725 467,713 480,711 497,711 527,703 560,697 577,680 593,647 608,620 623,593 657,570 677,540 693,531 727,531 747,547 770,562 800,583 823,591 850,598 903,598 933,593 960,581 980,569 1013,570 1037,569 1060,582 1100,593 1133,595 1167,595 1210,591 1223,585 1260,553 1293,518 1320,490 1330,483 1350,484 1370,497 1403,507 1427,508 1440,523 1460,540 1480,548 1507,557 1530,577 1553,590 1577,593 1603,592 1617,600 1640,606 1687,611 1700,610 1747,611 1780,610 1793,604 1820,601 1853,601', G, 2);
line('49,103 63,101 69,97 70,77', G, 5);
line('130,77 140,97 150,125 160,153 173,193 187,247 197,283 210,337 218,387 230,432 239,465 250,458 267,447 283,442 320,438 340,436 367,440 383,450 397,470 408,490 423,530 437,573 447,587 457,617 467,637 480,641 503,633 513,613 530,583 543,553 557,510 570,480 583,452 600,438 627,437 660,434 693,427 713,424 720,426 730,438 740,457 757,477 773,480 807,482 830,486 847,495 863,510 877,517 893,517 910,510 930,503 960,500 1037,500 1050,507 1063,522 1077,537 1103,553 1127,555 1147,550 1160,537 1193,510 1227,488 1250,475 1263,460 1280,438 1295,413 1307,407 1327,402 1373,402 1400,403 1420,403 1435,408 1450,423 1458,438 1465,457 1480,470 1492,482 1502,497 1513,502 1533,506 1553,515 1570,522 1577,526 1583,537 1592,550 1603,557 1640,565 1657,574 1683,580 1703,579 1727,575 1747,567 1783,566 1853,564', G, 5, 'stroke-linecap="round"');

// day range bar
rect(1862, 77, 3, 370, '#e81c0c');
rect(1862, 447, 3, 427, '#1159cc');

// OBV panel
area('49,889 68,892 69,900 60,900 52,898', '#0000ff');
line('49,896 54,901 60,900 64,898 67,900', '#ff0000', 1);
area('68,897 72,898 80,930 90,965 98,977 103,995 108,1008 104,1011 96,1009 92,1004 88,1000 84,1022 78,1034 73,1028 70,960', '#0000ff');
line('70,895 70,1028', '#ff0000', 2);
line('72,888 72,1036', '#ff0000', 1);
line('84,1022 88,1000 92,1006 96,1011 104,1008', '#ff0000', 1);
line('49,888 69,889 75,897 99,937 145,987 165,1005 173,1010 192,1007 220,1003 245,998 269,992 294,988 322,986 359,991 392,995 433,999 490,1002 531,1001 571,996 604,993 640,993 735,993 857,996 980,1000 1102,1003 1228,1005 1283,1002 1329,994 1356,991 1384,991 1416,996 1457,1000 1544,1003 1682,1007 1852,1008', '#993300', 3);
line('49,892 70,892 80,898 163,934 188,945 237,965 294,987 327,998 359,996 482,995 531,998 588,998 640,996 735,994 857,997 980,999 1102,1003 1200,1004 1278,1004 1347,1000 1420,997 1535,997 1590,1001 1659,1004 1751,1006 1852,1007', '#00ffff', 3);
const R = '#ff0000', B = '#0000ff';
area('107,1008 113,1003 119,1008 113,1015', R);
area('160,1008 169,1003 190,1000 200,997 216,997 217,985 222,992 232,988 237,980 241,984 262,981 285,985 245,987 225,994 205,1001 173,1007', R);
area('532,1000 533,989 547,991 555,984 559,990 575,989 550,994', R);
area('1258,1004 1262,1003 1267,994 1276,995 1280,983 1285,979 1294,979 1297,988 1285,995 1276,1001', R);
area('300,986 325,990 345,996 330,998 318,996', B);
area('263,985 275,985 268,989', B);
area('405,999 435,1002 425,1005 412,1003', B);
area('1300,988 1320,985 1345,991 1370,996 1352,998 1330,991', B);
area('1426,998 1460,1002 1435,1004', B);
line('330,997 360,999 405,1002 430,1005 470,1003 530,1001', R, 1);
line('107,1007 120,1008 130,1008 163,1008 173,1006 190,1003 205,1000 225,993 245,986 262,985 285,985 310,988 340,995 360,998 400,999 425,1003 470,1002 530,1000 550,993 575,989 600,991 620,994 640,995 735,995 857,997 980,1001 1102,1004 1200,1005 1260,1004 1275,1000 1300,989 1325,987 1345,990 1370,996 1400,998 1430,999 1460,1002 1600,1005 1700,1006 1852,1008', B, 1);
// volume
let vr = '', vb = '';
for (let x = 50; x < 1852; x += 2) {
  const busy = x < 130 ? 9 : x < 420 ? 5 : x > 1260 && x < 1350 ? 6 : 2.5;
  const h = 1 + rnd() * rnd() * busy, d = `M${x + .5} 1037v-${Math.ceil(h)}`;
  if (rnd() < .5) vr += d; else vb += d;
}
[[86, 19], [82, 24], [165, 13], [217, 19], [232, 10], [239, 8], [261, 8], [316, 9], [410, 7], [532, 18], [556, 11], [602, 9], [1265, 10], [1279, 23], [1287, 8], [1296, 10], [1329, 8], [1351, 7], [1512, 7], [1605, 7], [880, 6], [936, 6], [720, 5]]
  .forEach(([x, h]) => vr += `M${x + .5} 1037v-${h}`);
out.push(`<path d="${vr}" stroke="${RED}" fill="none"/><path d="${vb}" stroke="${BLU}" fill="none"/>`);
rect(49, 874, 1817, 1, '#8c8c8c');

// crosshair
rect(49, 316, 1813, 1, '#ff0000');
rect(1563, 77, 1, 961, '#ff0000');
document.getElementById('canvas').innerHTML = out.join('');

// labels
const top_ = y => `top:${((y - Y0) / H * 100).toFixed(2)}%`;
const put = (id, html) => document.getElementById(id).insertAdjacentHTML('beforeend', html);
const label = (id, y, text, cls = '') => put(id, `<span class="${cls}" style="${top_(y)}">${text}</span>`);
const tick = (id, y, cls = '') => put(id, `<i class="${cls}" style="${top_(y)}"></i>`);
[['26,950', 116], ['26,803', 170], ['26,657', 222], ['26,511', 276], ['26,365', 330], ['26,219', 383], ['26,073', 437], ['25,926', 491], ['25,780', 546], ['25,634', 602], ['25,488', 656], ['25,342', 712], ['25,196', 768], ['25,050', 824]]
  .forEach(([t, y]) => label('axisLeft', y, t));
['50,000', '25,000', '0,00', '25,000', '50,000', '75,000', '00,000'].forEach((t, i) => {
  label('axisLeft', 903 + i * 20, t, 'low'); tick('axisLeft', 904 + i * 20, 'big'); tick('axisLeft', 894 + i * 20);
});
for (let i = -3; i < 60; i++) {
  const y = 126 + i * 12.84;
  if (y < 872) tick('axisRight', y, i % 5 ? '' : 'big');
}
['70,00', '65,00', '60,00', '', '50,00', '45,00', '40,00', '35,00', '30,00', '25,00', '20,00', '15,00']
  .forEach((t, i) => t && label('axisRight', 125 + i * 64.2, t));
['100,000', '75,000', '50,000', '25,000'].forEach((t, i) => label('axisRight', 892 + i * 36, t, 'low'));
for (let i = -1; i < 13; i++) tick('axisRight', 892 + i * 12, i % 3 ? '' : 'big');
['axisLeft', 'axisRight'].forEach(a => {
  tick(a, 874, 'rule');
  label(a, 316, '26,401<em>+1,35%</em>', 'badge');
});
label('axisLeft', 613, '5,600', 'now'); label('axisLeft', 626, ',73%', 'chg');
label('axisRight', 613, '25,600', 'now'); label('axisRight', 626, '-1,73%', 'chg');
label('axisRight', 84, 'LC:2,40', 'lc'); label('axisRight', 96, 'HC:-5,01', 'hc');

const note = (y, text, color, side) => put('plot', `<span style="${top_(y)};color:${color};${side}">${text}</span>`);
const R0 = 'right:5px';
note(125, '최고 26,950 (-5,01%, 15:19)', '#ff0000', 'left:15px');
note(836, '최저 25,000 (2,40%, 09:00)', '#0000c8', 'left:46px');
note(455, '전일종가 26,050 (0,00%)', '#993300', 'right:3px');
note(799, '당일시가 25,150 (-3,45%)', '#00e000', 'right:3px');
note(122, '저가/지수 24: 25,89', '#000', R0);
note(122, '(고가+저가+종가)/3 솔8: 25,894', '#ff6600', R0);
note(135, '120: 25,661', '#c0c0c0', R0);
note(135, '20: 25,651', '#00ccff', R0);
note(146, '180: 25,830', '#000', R0);
note(146, '540: 25,830', '#000', R0);
note(158, '15: 25,678', '#ffcc00', R0);
note(158, '5: 25,651', '#ff0000', R0);
note(170, '30: 25,678', '#c8e2ff', R0);
note(170, '10: 25,651', '#0000ff', R0);
[['거래량: 133', '#339999'], ['단순 3: 80', '#ffff00'], ['54: 66', '#000'], ['13: 54', '#00ff00'], ['27: 78', '#ccffff'], ['Signal 60: -80,640', '#993300'], ['Signal 100: -80,553', '#ff9900'], ['Signal 150: -80,361', '#00ffff'], ['OBV: -80,767', '#ff0000'], ['Signal 24: -80,776', '#0000ff']]
  .forEach(([t, c], i) => note(920 + i * 12 - (i > 6 ? 1 : 0), t, c, R0));

const left = x => `left:${((x - X0) / W * 100).toFixed(2)}%`;
put('times', `<span class="first" style="${left(49)}">05/23</span>`);
['09:10', '09:20', '09:30', '09:40', '09:50', '10:00', '10:10', '10:20', '10:30']
  .forEach((t, i) => put('times', `<span style="${left(gridX[i])}">${t}</span>`));
put('times', `<span class="cursor" style="${left(1563)}">2024/05/24(금) 10:16:15</span>`);
```
